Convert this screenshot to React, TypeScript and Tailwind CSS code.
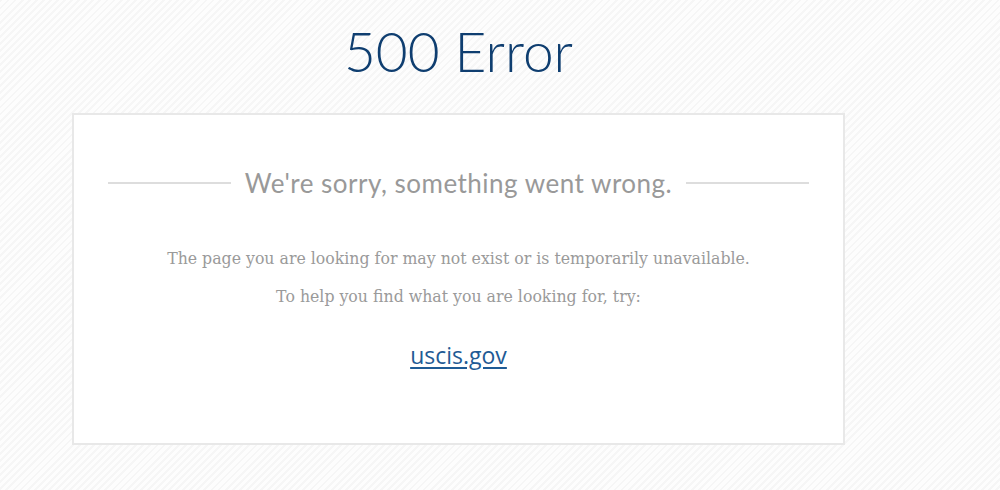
export default function App() {
    return (
        <div className="min-h-[490px] w-full bg-[repeating-linear-gradient(135deg,#f6f6f6_0px,#f6f6f6_2px,#fdfdfd_2px,#fdfdfd_5px)] pt-[18px]">
            <div className="ml-[72px] w-[773px]">
                <h1 className="text-center font-['Lato',sans-serif] font-light text-[55px] leading-[66px] text-[#0f3e70]">
                    500 Error
                </h1>
                <div className="mt-[29px] h-[332px] border-2 border-[#e8e8e8] bg-white px-[34px] pt-[50px]">
                    <div className="flex items-center gap-[14px]">
                        <div className="h-[2px] flex-1 bg-[#dddddd]"></div>
                        <h2 className="font-['Lato',sans-serif] text-[26px] tracking-[0.5px] leading-[36px] text-[#999999]">
                            We're sorry, something went wrong.
                        </h2>
                        <div className="h-[2px] flex-1 bg-[#dddddd]"></div>
                    </div>
                    <p className="mt-[46px] text-center font-['DejaVu_Serif',serif] text-[15.75px] leading-[24px] text-[#9a9a9a]">
                        The page you are looking for may not exist or is temporarily unavailable.
                    </p>
                    <p className="mt-[14px] text-center font-['DejaVu_Serif',serif] text-[15.75px] leading-[24px] text-[#9a9a9a]">
                        To help you find what you are looking for, try:
                    </p>
                    <div className="mt-[30px] text-center leading-[32px]">
                        <a href="#" className="font-['Open_Sans',sans-serif] text-[23px] text-[#1f5b95] underline underline-offset-[3px]">
                            uscis.gov
                        </a>
                    </div>
                </div>
            </div>
        </div>
    )
}
